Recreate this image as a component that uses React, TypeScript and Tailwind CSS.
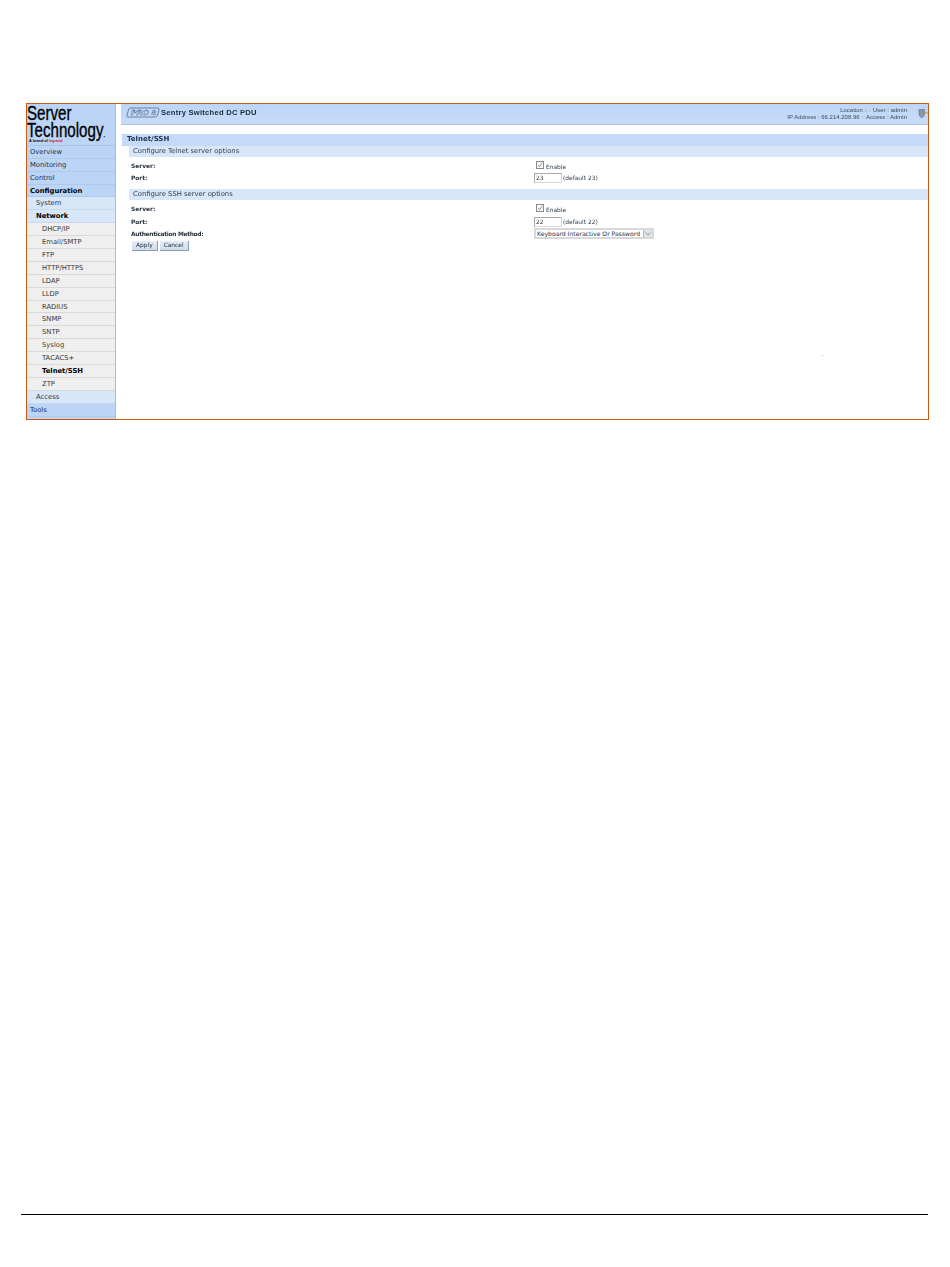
const verdana = "font-['DejaVu_Sans',sans-serif]";

const topItems = ['Overview', 'Monitoring', 'Control'];
const networkItems = ['DHCP/IP', 'Email/SMTP', 'FTP', 'HTTP/HTTPS', 'LDAP', 'LLDP', 'RADIUS', 'SNMP', 'SNTP', 'Syslog', 'TACACS+', 'Telnet/SSH', 'ZTP'];

const NavTop = ({ label, bold }: { label: string; bold?: boolean }) => (
  <div className={`h-[12.9px] leading-[12.9px] pl-[3px] border-b border-[#b0c9e8] bg-[#bcd5f7] text-[#1c2f48] ${bold ? 'font-bold text-black' : ''}`}>
    {label}
  </div>
);

const NavMid = ({ label, bold }: { label: string; bold?: boolean }) => (
  <div className={`h-[12.9px] leading-[12.9px] pl-[9px] border-b border-[#c8d9ee] bg-[#d8e6f9] text-[#2a3a4e] ${bold ? 'font-bold text-black' : ''}`}>
    {label}
  </div>
);

const NavSub = ({ label, active }: { label: string; active?: boolean }) => (
  <div className={`h-[12.9px] leading-[12.9px] pl-[15px] border-b border-[#d9d9d9] bg-[#efefef] text-[#3a3a3a] ${active ? 'font-bold text-black' : ''}`}>
    {label}
  </div>
);

const Sidebar = () => (
  <aside className="w-[89px] shrink-0 flex flex-col bg-[#bcd5f7] border-r border-[#a9bcd6] text-[6.8px]">
    <div className="h-[41.9px] shrink-0 border-b border-[#a9c4e4] font-['Liberation_Sans',sans-serif] text-black">
      <div className="text-[21px] leading-[17px] origin-left scale-x-[0.72] whitespace-nowrap [-webkit-text-stroke:0.35px_black]">Server</div>
      <div className="text-[21px] leading-[17.5px] origin-left scale-x-[0.72] whitespace-nowrap [-webkit-text-stroke:0.35px_black]">
        Technology<span className="text-[7px] leading-[0]">.</span>
      </div>
      <div className="ml-[2px] text-[3.8px] leading-[4px] font-bold whitespace-nowrap">
        A brand of <span className="text-[#d0202a]">legrand</span>
      </div>
    </div>
    {topItems.map((label) => (
      <NavTop key={label} label={label} />
    ))}
    <NavTop label="Configuration" bold />
    <NavMid label="System" />
    <NavMid label="Network" bold />
    {networkItems.map((label) => (
      <NavSub key={label} label={label} active={label === 'Telnet/SSH'} />
    ))}
    <NavMid label="Access" />
    <NavTop label="Tools" />
  </aside>
);

const ProBadge = () => (
  <svg width="34" height="11" viewBox="0 0 34 11" className="shrink-0">
    <path d="M4 1 H32 Q33.5 1 33 3 L31.5 8 Q31 10 29 10 H2 Q0.5 10 1 8 L2.5 3 Q3 1 4 1 Z" fill="#c4d9f5" stroke="#4d6f99" strokeWidth="0.8" />
    <text x="5" y="8.2" fontFamily="Liberation Sans, sans-serif" fontSize="8" fontWeight="700" fontStyle="italic" fill="#ffffff" stroke="#2f5688" strokeWidth="0.45" textLength="25">
      PRO 8
    </text>
  </svg>
);

const Row = ({ label, children, tight }: { label: string; children: React.ReactNode; tight?: boolean }) => (
  <div className="flex items-center h-[11px]">
    <div className={`w-[403px] shrink-0 font-bold text-[#26303c] ${tight ? 'tracking-[-0.3px]' : ''}`}>{label}</div>
    {children}
  </div>
);

const EnableCheck = () => (
  <div className="flex items-center gap-[2px] pl-[2px] text-[#33404e]">
    <span className="w-[8px] h-[8px] border border-[#8a8a8a] bg-[#fbfbfb] flex items-center justify-center -translate-y-[1px]">
      <svg width="6" height="6" viewBox="0 0 7 7">
        <path d="M1 3.5 L3 5.5 L6 1" fill="none" stroke="#6a6a6a" strokeWidth="0.9" />
      </svg>
    </span>
    <span className="pt-[2px]">Enable</span>
  </div>
);

const PortInput = ({ value, note }: { value: string; note: string }) => (
  <div className="flex items-center text-[#33404e]">
    <div className="w-[28px] h-[10px] leading-[9px] pl-[1px] border border-[#d8d8d8] border-l-[#a8a8a8] border-t-[#a8a8a8] bg-white">{value}</div>
    <span className="ml-[1px]">{note}</span>
  </div>
);

const FormButton = ({ label }: { label: string }) => (
  <div className="h-[10px] leading-[9px] px-[4px] text-center bg-gradient-to-b from-[#e6edf6] to-[#d0dcec] border-r border-b border-[#8b9db5] text-[#1d2a3a]">
    {label}
  </div>
);

const Header = () => (
  <header className="h-[21px] ml-[5px] flex items-center bg-gradient-to-b from-[#bcd5f7] to-[#c9dcf9] border-b border-[#adc3e0]">
    <div className="pl-[5px] pb-[2px] flex items-center gap-[1px]">
      <ProBadge />
      <span className="text-[7.6px] font-bold text-[#1c2a3c] font-['Liberation_Sans',sans-serif] tracking-[0.25px]">Sentry Switched DC PDU</span>
    </div>
    <div className="ml-auto pr-[11px] text-right text-[5.9px] leading-[7.5px] tracking-[0.05px] text-[#3c4a5c] font-['Liberation_Sans',sans-serif]">
      <div>Location : <span className="text-[#b9a15c]">::</span> User : admin</div>
      <div>IP Address : 66.214.208.96 <span className="text-[#b9a15c]">::</span> Access : Admin</div>
    </div>
    <svg width="10" height="10" viewBox="0 0 10 10" className="shrink-0 -translate-y-[0.5px]">
      <path d="M1 1 H6.5 V5 Q6.5 8 3.7 9.5 Q1 8 1 5 Z" fill="#8a97a8" stroke="#5c6a7c" strokeWidth="0.6" />
      <path d="M6.5 4.5 H10" stroke="#d08a2a" strokeWidth="1.2" />
    </svg>
  </header>
);

const App = () => (
  <div className={`relative h-[1267px] w-[950px] bg-white pt-[103px] ${verdana}`}>
    <div className="ml-[26px] w-[903px] h-[317px] border border-[#cc5a14] flex items-stretch overflow-hidden text-[5.9px] blur-[0.25px]">
      <Sidebar />
      <main className="flex-1 flex flex-col">
        <Header />
        <div className="mt-[9px] ml-[6px] h-[11.5px] leading-[11.5px] pl-[5px] bg-[#c5daf9] text-[7px] font-bold text-[#22344c]">Telnet/SSH</div>
        <div className="ml-[13px] h-[11px] leading-[11px] pl-[4px] bg-[#d8e6f9] text-[6.8px] text-[#2c3c50]">Configure Telnet server options</div>
        <div className="ml-[15px] mt-[4px] flex flex-col gap-[1px]">
          <Row label="Server:"><EnableCheck /></Row>
          <Row label="Port:"><PortInput value="23" note="(default 23)" /></Row>
        </div>
        <div className="ml-[13px] mt-[5px] h-[11.5px] leading-[11.5px] pl-[4px] bg-[#d8e6f9] text-[6.8px] text-[#2c3c50]">Configure SSH server options</div>
        <div className="ml-[15px] mt-[4px] flex flex-col gap-[1.5px]">
          <Row label="Server:"><EnableCheck /></Row>
          <Row label="Port:"><PortInput value="22" note="(default 22)" /></Row>
          <Row label="Authentication Method:" tight>
            <div className="w-[120px] h-[11px] -translate-y-[1px] flex items-center justify-between border-2 border-[#d8d8d8] bg-white pl-[1px] text-[6.1px] text-[#26303c] whitespace-nowrap">
              <span>Keyboard Interactive Or Password</span>
              <span className="w-[9px] h-full flex items-center justify-center bg-[#dfe3e8] border-l border-[#b5b5b5]">
                <svg width="6" height="4" viewBox="0 0 6 4"><path d="M0.5 0.5 L3 3 L5.5 0.5" fill="none" stroke="#7d8a9c" strokeWidth="0.8" /></svg>
              </span>
            </div>
          </Row>
          <div className="flex gap-[2px] ml-[1px] -mt-[1px]">
            <FormButton label="Apply" />
            <FormButton label="Cancel" />
          </div>
        </div>
      </main>
    </div>
    <div className="absolute left-[822px] top-[355px] w-px h-px bg-[#b8b8b8]" />
    <div className="absolute left-[21px] top-[1214px] w-[907px] h-px bg-black" />
  </div>
);

export default App;
